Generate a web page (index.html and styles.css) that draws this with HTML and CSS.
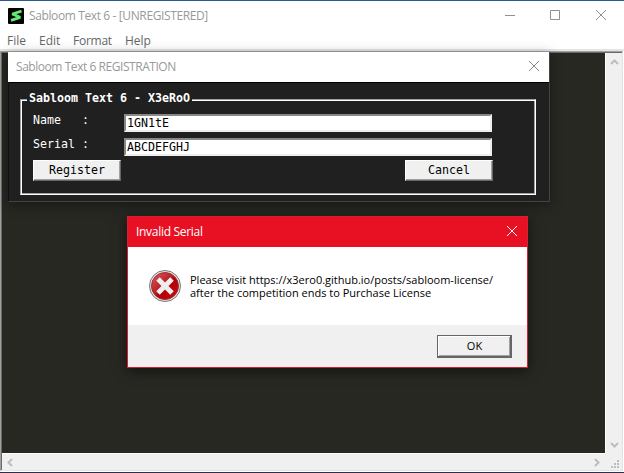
FILE: index.html
```html
<!DOCTYPE html>
<html lang="en">
<head>
<meta charset="utf-8">
<title>Sabloom Text 6</title>
<link rel="stylesheet" href="styles.css">
</head>
<body>
<main class="app">
  <header class="titlebar">
    <svg class="logo" width="16" height="16" viewBox="0 0 16 16"><rect width="16" height="16" rx="1" fill="#000"/><path d="M13.500 3.200 4.300 6 12.200 9.300 3 12.300" fill="none" stroke="#66e875" stroke-width="2.800" stroke-linejoin="bevel"/></svg>
    <h1 class="app-title">Sabloom Text 6 - [UNREGISTERED]</h1>
    <svg class="window-controls" width="102" height="12" viewBox="0 0 102 12" fill="none" stroke="#909090"><path d="M0 6.5h10M45.500 1.500h9v9h-9zM91 1l10 10M101 1 91 11"/></svg>
  </header>
  <nav class="menu"><span class="file">File</span><span class="edit">Edit</span><span class="format">Format</span><span class="help">Help</span></nav>
  <section class="workspace">
    <div class="canvas"></div>
    <div class="vscroll">
      <svg width="9" height="6" viewBox="0 0 9 6"><path d="M1 5 4.500 1.500 8 5"/></svg>
      <svg width="9" height="6" viewBox="0 0 9 6"><path d="M1 1 4.500 4.500 8 1"/></svg>
    </div>
    <div class="hscroll">
      <svg width="6" height="9" viewBox="0 0 6 9"><path d="M5 1 1.500 4.500 5 8"/></svg>
      <svg width="6" height="9" viewBox="0 0 6 9"><path d="M1 1 4.500 4.500 1 8"/></svg>
    </div>
    <div class="grip"><svg width="8" height="8" viewBox="0 0 8 8" fill="#bdbdbd"><path d="M6 0h2v2h-2zM3 3h2v2h-2zM6 3h2v2h-2zM0 6h2v2h-2zM3 6h2v2h-2zM6 6h2v2h-2z"/></svg></div>
  </section>
</main>

<section class="registration">
  <header class="reg-head"><h2 class="reg-title">Sabloom Text 6 REGISTRATION</h2>
    <svg width="12" height="12" viewBox="0 0 12 12" stroke="#888"><path d="M1 1l10 10M11 1 1 11"/></svg></header>
  <form class="reg-body">
    <div class="group">
      <div class="group-title">Sabloom Text 6 - X3eRoO</div>
      <div class="field"><label for="name">Name &nbsp; :</label><input id="name" value="1GN1tE"></div>
      <div class="field"><label for="serial">Serial :</label><input id="serial" value="ABCDEFGHJ"></div>
      <div class="actions"><button type="button">Register</button><button type="button">Cancel</button></div>
    </div>
  </form>
</section>

<section class="alert">
  <header class="alert-head"><h2 class="alert-title">Invalid Serial</h2>
    <svg width="12" height="12" viewBox="0 0 12 12" stroke="#fff"><path d="M1 1l10 10M11 1 1 11"/></svg></header>
  <div class="alert-body">
    <svg width="34" height="34" viewBox="0 0 34 34">
      <defs><linearGradient id="red" x1="0" y1="0" x2="1" y2="1"><stop offset="0" stop-color="#d96060"/><stop offset=".45" stop-color="#b92024"/><stop offset=".55" stop-color="#b00008"/><stop offset="1" stop-color="#cc1013"/></linearGradient></defs>
      <circle cx="17" cy="17" r="15.500" fill="#e4e4e4" stroke="#777"/>
      <circle cx="17" cy="17" r="13.500" fill="url(#red)" stroke="#a52a2c"/>
      <path d="m10 10 14 14m0-14-14 14" stroke="#eee" stroke-width="5"/>
    </svg>
    <p>Please visit https://x3ero0.github.io/posts/sabloom-license/<br>after the competition ends to Purchase License</p>
  </div>
  <footer class="alert-foot"><button class="ok" type="button">OK</button></footer>
</section>
</body>
</html>
```
FILE: styles.css
```css
* { box-sizing: border-box; }
body { margin: 0; width: 624px; height: 473px; overflow: hidden; font: 12px/16px "Open Sans", "Noto Sans", sans-serif; background: #fff; }
h1, h2, p { margin: 0; font-size: 12px; font-weight: 400; white-space: nowrap; }
svg { display: block; flex: none; }
.app { height: 473px; display: flex; flex-direction: column; border-top: 1px solid #285a8c; border-bottom: 1px solid #302c4b; }
.titlebar { height: 30px; display: flex; align-items: center; padding: 0 17px 2px 8px; color: #999; }
.logo { margin-top: 1px; }
.app-title { margin-left: 5px; margin-top: 2px; letter-spacing: -.38px; }
.window-controls { margin-left: auto; }
.menu { height: 20px; display: flex; padding: 2px 0 0 7px; color: #666; border-bottom: 2px solid #e5e5e5; line-height: 16px; }
.file { width: 32px; }
.edit { width: 34px; }
.format { width: 52px; letter-spacing: -.25px; }
.workspace { flex: 1; display: grid; grid-template: 400px 17px / 603px 17px; border: 1px solid #a0a0a0; border-right: 1px solid #e3e3e3; border-bottom-color: #e3e3e3; margin: 0 1px 1px 0; box-shadow: inset 1px 1px #696969; padding: 1px 0 0 1px; background: #f0f0f0; }
.canvas { background: #272822; }
.vscroll { display: flex; flex-direction: column; justify-content: space-between; align-items: center; padding: 6px 0 5px; border-left: 1px solid #fff; }
.hscroll { display: flex; justify-content: space-between; align-items: center; padding: 0 5px; border-top: 1px solid #fff; }
.vscroll path, .hscroll path { fill: none; stroke: #bdbdbd; stroke-width: 2; }
.grip { display: flex; align-items: end; justify-content: end; padding: 0 3px 2px 0; }
.registration { position: absolute; left: 8px; top: 52px; width: 542px; height: 150px; border: 1px solid #444; border-top: 0; border-left-color: #111; background: #202020; box-shadow: 0 3px 12px #0006; }
.reg-head { height: 30px; margin-left: -1px; display: flex; align-items: center; justify-content: space-between; padding: 0 9px 0 8px; background: #fff; color: #999; }
.reg-head svg { margin-top: -2px; }
.reg-title { letter-spacing: -.45px; }
.reg-body { height: 119px; padding: 16px 13px 7px 11px; border-top: 1px solid #000; }
.group { height: 96px; border: 1px solid #fff; box-shadow: inset 1px 1px #fff, inset -1px -1px #a0a0a0; border-top-color: #a0a0a0; border-left-color: #a0a0a0; font: 11.63px/14px "DejaVu Sans Mono", monospace; color: #fff; padding: 0 43px 0 12px; }
.group-title { width: 165px; height: 14px; margin: -9px 0 9px -6px; padding-left: 2px; background: #202020; font-weight: 700; white-space: nowrap; }
.field { height: 24px; display: flex; align-items: start; white-space: pre; }
.field label { width: 91px; margin-top: -1px; }
.field input { width: 368px; height: 18px; padding: 0 1px 1px; border: 2px solid; border-color: #888 #eee #eee #888; outline: 0; background: #fff; color: #000; font: inherit; line-height: 13px; }
.actions { display: flex; justify-content: space-between; margin-right: -1px; margin-top: -2px; }
.actions button { border: 1px solid; border-color: #fff #666 #666 #fff; box-shadow: inset -1px -1px #a0a0a0; background: #f0f0f0; color: #000; }
.actions button { width: 88px; height: 21px; padding: 0 0 2px; font: inherit; }
.alert { position: absolute; left: 127px; top: 216px; width: 401px; height: 152px; border: 1px solid #d82032; background: #fff; box-shadow: 0 3px 12px #0008; }
.alert-head { height: 30px; background: #e81123; color: #fff; display: flex; align-items: center; justify-content: space-between; padding: 0 9px 0 8px; }
.alert-head svg { margin-top: -2px; }
.alert-title { letter-spacing: -.3px; }
.alert-body { height: 78px; display: flex; align-items: center; padding-left: 20px; gap: 8px; }
.alert-body p { font-size: 11px; line-height: 13px; color: #000; }
.alert-foot { height: 42px; padding: 10px 15px; background: #f0f0f0; display: flex; justify-content: end; }
.ok { width: 75px; height: 23px; padding: 0 0 1px 1px; color: #000; background: #f0f0f0; font: 11px/16px "Open Sans", sans-serif; border: solid #666; border-width: 1px 2px 2px 1px; box-shadow: inset 1px 1px #fff, inset -1px -1px #a0a0a0; }
```
